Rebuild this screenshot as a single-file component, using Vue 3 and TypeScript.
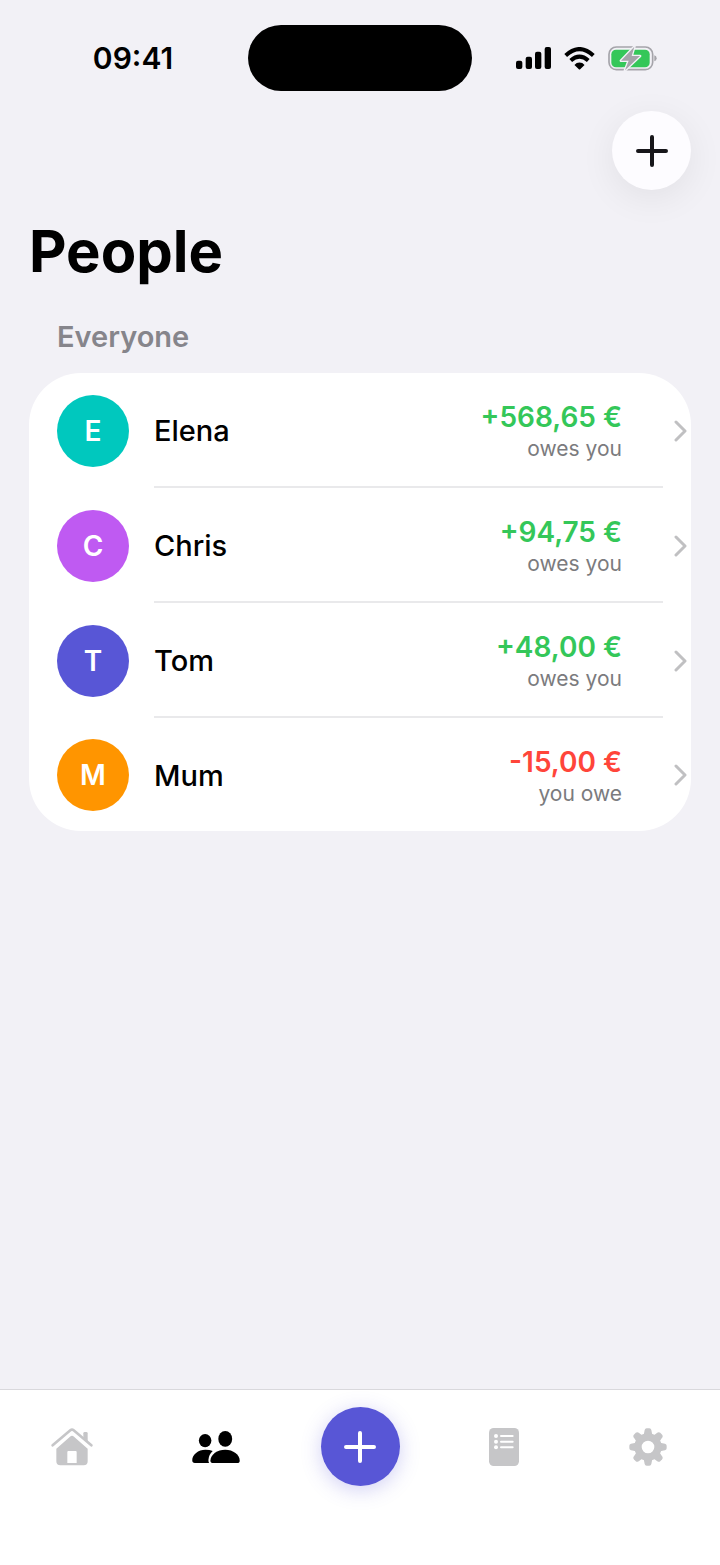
<script setup lang="ts">
interface Person {
  id: string
  name: string
  tone: string
  amount: string
  note: string
  negative?: boolean
}

const people: Person[] = [
  { id: 'elena', name: 'Elena', tone: 'teal', amount: '+568,65 €', note: 'owes you' },
  { id: 'chris', name: 'Chris', tone: 'purple', amount: '+94,75 €', note: 'owes you' },
  { id: 'tom', name: 'Tom', tone: 'indigo', amount: '+48,00 €', note: 'owes you' },
  { id: 'mum', name: 'Mum', tone: 'orange', amount: '-15,00 €', note: 'you owe', negative: true },
]

const gearTeeth: number[] = [0, 45, 90, 135, 180, 225, 270, 315]
</script>

<template>
  <div class="screen">
    <div class="status">
      <time class="clock">09:41</time>
      <div class="island"></div>
      <div class="indicators">
        <svg class="signal" viewBox="0 0 105 66" aria-hidden="true">
          <rect x="0" y="41" width="19" height="25" rx="6" />
          <rect x="29" y="29" width="19" height="37" rx="6" />
          <rect x="57" y="14" width="19" height="52" rx="6" />
          <rect x="86" y="0" width="19" height="66" rx="6" />
        </svg>
        <svg class="wifi" viewBox="0 0 92 68" aria-hidden="true">
          <g fill="none" stroke="#000" stroke-width="12">
            <path d="M5 25 Q46 -13 87 25" />
            <path d="M20 40 Q46 17 72 40" />
          </g>
          <path d="M46 46 Q55 46 61 53 L48 66 Q46 68 44 66 L31 53 Q37 46 46 46Z" />
        </svg>
        <svg class="battery" viewBox="0 0 147 75" aria-hidden="true">
          <rect x="3" y="3" width="131" height="68" rx="22" fill="none" stroke="#a5a4aa" stroke-width="5" />
          <rect x="10" y="11" width="115" height="53" rx="14" fill="#34c759" />
          <path d="M139 28 Q146 30 146 37 Q146 44 139 46Z" fill="#a5a4aa" />
          <path
            d="M79 2 L39 44 H62 L51 73 L96 30 H71Z"
            fill="#a5a4aa"
            stroke="#f2f1f6"
            stroke-width="8"
            stroke-linejoin="round"
            paint-order="stroke"
          />
        </svg>
      </div>
    </div>

    <header class="header">
      <button class="add" type="button" aria-label="Add person">
        <svg viewBox="0 0 32 32" aria-hidden="true"><path d="M16 2V30M2 16H30" /></svg>
      </button>
      <h1>People</h1>
    </header>

    <main>
      <h2>Everyone</h2>
      <ul class="card">
        <li v-for="person in people" :key="person.id">
          <a class="row" :href="`#${person.id}`">
            <span class="avatar" :class="person.tone">{{ person.name[0] }}</span>
            <span class="details">
              <span class="name">{{ person.name }}</span>
              <span class="balance">
                <span class="amount" :class="{ negative: person.negative }">{{ person.amount }}</span>
                <span class="note">{{ person.note }}</span>
              </span>
            </span>
            <svg class="chevron" viewBox="0 0 14 22" aria-hidden="true"><path d="M3 2L12 11L3 20" /></svg>
          </a>
        </li>
      </ul>
    </main>

    <nav class="tabs" aria-label="Main">
      <button type="button" aria-label="Home">
        <svg width="42" height="38" viewBox="0 0 126 114" aria-hidden="true">
          <path d="M5 52 L58 7 Q63 3 68 7 L121 52" fill="none" stroke="currentColor" stroke-width="8" stroke-linecap="round" />
          <path d="M97 30 V16 Q97 12 101 12 H106 Q110 12 110 16 V41Z" />
          <path
            fill-rule="evenodd"
            d="M57 26 Q63 21 69 26 L110 62 V100 Q110 112 98 112 H28 Q16 112 16 100 V62Z M52 69 Q49 69 49 72 V105 H77 V72 Q77 69 74 69Z"
          />
        </svg>
      </button>
      <button type="button" class="active" aria-label="People" aria-current="page">
        <svg width="48" height="32" viewBox="0 0 144 97" aria-hidden="true">
          <ellipse cx="39" cy="29" rx="19" ry="20" />
          <ellipse cx="100" cy="24" rx="21" ry="24" />
          <path d="M8 97 Q0 97 0 89 C0 72 18 57 40 57 Q53 57 62 61 Q50 72 49 88 Q49 94 51 97Z" />
          <path d="M64 97 Q55 97 55 90 C56 71 76 57 100 57 C124 57 144 72 144 90 Q144 97 136 97Z" />
        </svg>
      </button>
      <button type="button" aria-label="Add expense">
        <span class="fab">
          <svg viewBox="0 0 32 32" aria-hidden="true"><path d="M16 2V30M2 16H30" /></svg>
        </span>
      </button>
      <button type="button" aria-label="Activity">
        <svg width="30" height="38" viewBox="0 0 90 114" aria-hidden="true">
          <rect width="90" height="114" rx="14" />
          <g fill="#fff">
            <circle cx="21" cy="24" r="6" />
            <circle cx="21" cy="41" r="6" />
            <circle cx="21" cy="58" r="6" />
          </g>
          <path d="M36 24H71M36 41H71M36 58H71" stroke="#fff" stroke-width="6" stroke-linecap="round" />
        </svg>
      </button>
      <button type="button" aria-label="Settings">
        <svg width="38" height="38" viewBox="-57 -57 114 114" aria-hidden="true">
          <path
            v-for="angle in gearTeeth"
            :key="angle"
            :transform="`rotate(${angle})`"
            d="M-13 -36 L-10 -51 Q-9 -56 -4 -56 H4 Q9 -56 10 -51 L13 -36Z"
          />
          <circle r="30" fill="none" stroke="currentColor" stroke-width="22" />
        </svg>
      </button>
    </nav>
  </div>
</template>

<style>
body {
  margin: 0;
  background: #f2f1f6;
}
</style>

<style scoped>
.screen {
  display: flex;
  flex-direction: column;
  min-height: 100vh;
  background: #f2f1f6;
  color: #000;
  font-family: Inter, 'Liberation Sans', sans-serif;
}

button {
  border: 0;
  padding: 0;
  font: inherit;
  cursor: pointer;
}

.status {
  display: grid;
  grid-template-columns: 1fr 224px 1fr;
  align-items: center;
  padding-top: 25px;
}

.clock {
  padding-left: 18px;
  text-align: center;
  font-size: 30px;
  line-height: 36px;
  font-weight: 600;
}

.island {
  height: 66px;
  border-radius: 33px;
  background: #000;
}

.indicators {
  display: flex;
  align-items: center;
  justify-content: center;
  gap: 13px;
  padding-right: 20px;
}

.signal {
  width: 35px;
  height: 22px;
}

.wifi {
  width: 31px;
  height: 23px;
}

.battery {
  width: 49px;
  height: 25px;
}

.header {
  display: flex;
  flex-direction: column;
  padding: 20px 29px 0;
}

.add {
  display: grid;
  place-items: center;
  align-self: flex-end;
  width: 79px;
  height: 79px;
  border-radius: 50%;
  background: #fdfcff;
  box-shadow: 0 8px 36px rgba(0, 0, 0, 0.07);
}

.add svg,
.fab svg {
  width: 32px;
  height: 32px;
  fill: none;
  stroke: #17161a;
  stroke-width: 4;
  stroke-linecap: round;
}

h1 {
  margin: 25px 0 0;
  font-size: 58px;
  line-height: 72px;
  font-weight: 700;
}

main {
  padding: 0 29px 32px;
}

h2 {
  margin: 32px 28px 18px;
  color: #86858b;
  font-size: 29px;
  line-height: 36px;
  font-weight: 600;
}

.card {
  margin: 0;
  padding: 0;
  list-style: none;
  border-radius: 52px;
  background: #fff;
}

.row {
  display: flex;
  align-items: center;
  padding: 0 4px 0 28px;
  color: inherit;
  text-decoration: none;
}

.avatar {
  display: grid;
  place-items: center;
  flex: none;
  width: 72px;
  height: 72px;
  margin-right: 25px;
  border-radius: 50%;
  color: #fff;
  font-size: 28px;
  font-weight: 600;
}

.teal {
  background: #00c8be;
}

.purple {
  background: #bf5af2;
}

.indigo {
  background: #5856d6;
}

.orange {
  background: #ff9500;
}

.details {
  display: flex;
  align-items: center;
  justify-content: space-between;
  flex: 1;
  height: 113px;
  padding-right: 41px;
  border-bottom: 2px solid #e9e9eb;
}

li:last-child .details {
  border-bottom: 0;
}

.name {
  padding-top: 2px;
  font-size: 29px;
  line-height: 36px;
  font-weight: 500;
}

.balance {
  display: flex;
  flex-direction: column;
  align-items: flex-end;
  padding-top: 4px;
}

.amount {
  color: #34c759;
  font-size: 28px;
  line-height: 34px;
  font-weight: 600;
}

.negative {
  color: #ff453a;
}

.note {
  color: #7b7b7e;
  font-size: 21px;
  line-height: 30px;
}

.chevron {
  flex: none;
  width: 14px;
  height: 22px;
  margin-left: 10px;
  fill: none;
  stroke: #c0c0c2;
  stroke-width: 3;
  stroke-linecap: round;
  stroke-linejoin: round;
}

.tabs {
  display: grid;
  grid-template-columns: repeat(5, 1fr);
  margin-top: auto;
  padding: 17px 0 79px;
  border-top: 1px solid #d9d8dc;
  background: #fff;
}

.tabs button {
  display: grid;
  place-items: center;
  background: none;
  color: #c6c6c8;
}

.tabs svg {
  fill: currentColor;
}

.tabs .active {
  color: #000;
}

.fab {
  display: grid;
  place-items: center;
  width: 79px;
  height: 79px;
  border-radius: 50%;
  background: #5856d6;
  box-shadow: 0 4px 20px rgba(88, 86, 214, 0.28);
}

.tabs .fab svg {
  fill: none;
  stroke: #fff;
}
</style>
